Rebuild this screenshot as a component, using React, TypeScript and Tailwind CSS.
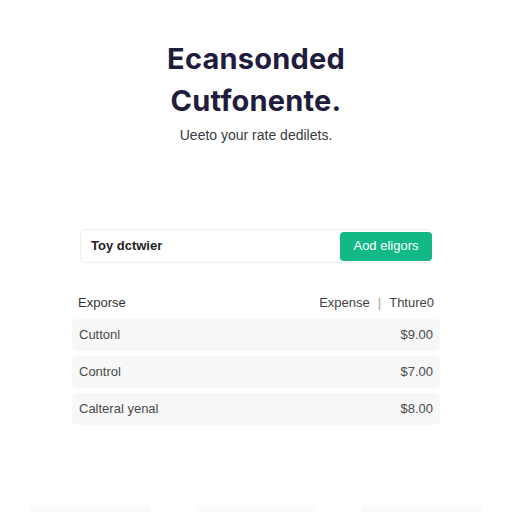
import React from 'react';

interface Row {
  name: string;
  amount: string;
}

const rows: Row[] = [
  { name: 'Cuttonl', amount: '$9.00' },
  { name: 'Control', amount: '$7.00' },
  { name: 'Calteral yenal', amount: '$8.00' },
];

const App: React.FC = () => {
  return (
    <div className="w-[512px] h-[512px] overflow-hidden bg-white flex flex-col items-center" style={{ fontFamily: '"Liberation Sans", Arial, sans-serif' }}>
      <div className="pt-[38px] flex flex-col items-center">
        <h1 className="text-[29px] leading-[42px] font-bold text-[#1f1d3d] text-center tracking-[0.2px]" style={{ fontFamily: 'Inter, "Noto Sans", sans-serif' }}>
          Ecansonded
          <br />
          Cutfonente.
        </h1>
        <p className="mt-[3px] text-[14px] text-[#3a3a42]">Ueeto your rate dedilets.</p>
      </div>

      <div className="mt-[83px] w-[352px] h-[34px] flex items-center rounded-[6px] border border-[#eeeeee] bg-white">
        <span className="pl-[10px] flex-1 text-[13px] font-bold text-[#222]">Toy dctwier</span>
        <button className="h-[29px] w-[92px] mr-[-1px] rounded-[4px] bg-[#12b886] text-white text-[13px] flex items-center justify-center">
          Aod eligors
        </button>
      </div>

      <div className="mt-[30px] w-[368px] flex flex-col">
        <div className="flex items-center justify-between px-[6px] h-[20px] text-[13px] text-[#333]">
          <span>Exporse</span>
          <span className="flex items-center gap-[8px] text-[#444]">
            <span>Expense</span>
            <span className="text-[#999]">|</span>
            <span>Thture0</span>
          </span>
        </div>
        <div className="mt-[6px] flex flex-col gap-[5px]">
          {rows.map((row) => (
            <div key={row.name} className="h-[32px] rounded-[5px] bg-[#f7f7f8] flex items-center justify-between px-[7px] text-[13px] text-[#4a4a4a]">
              <span>{row.name}</span>
              <span>{row.amount}</span>
            </div>
          ))}
        </div>
      </div>

      <div className="mt-auto w-full flex justify-between px-[30px] pb-0">
        <div className="w-[120px] h-[7px] bg-[#fafafa] rounded-t" />
        <div className="w-[120px] h-[7px] bg-[#fafafa] rounded-t" />
        <div className="w-[120px] h-[7px] bg-[#fafafa] rounded-t" />
      </div>
    </div>
  );
};

export default App;
